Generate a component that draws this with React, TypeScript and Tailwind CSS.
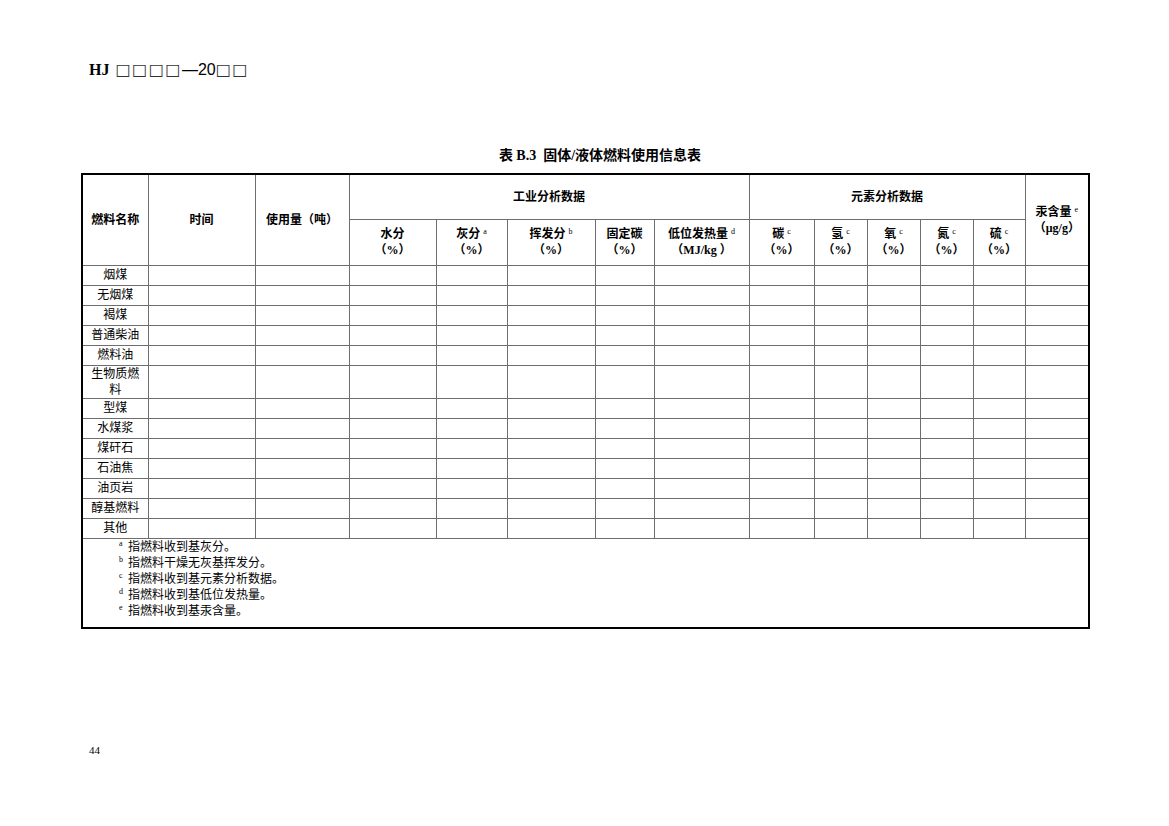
const serif = { fontFamily: '"Liberation Serif", "Noto Sans CJK SC", serif' };

const cols = [66, 107, 94, 87, 71, 88, 59, 95, 65, 53, 53, 53, 52, 64];

const fuels = [
  "烟煤",
  "无烟煤",
  "褐煤",
  "普通柴油",
  "燃料油",
  "生物质燃料",
  "型煤",
  "水煤浆",
  "煤矸石",
  "石油焦",
  "油页岩",
  "醇基燃料",
  "其他",
];

const notes = [
  ["a", "指燃料收到基灰分。"],
  ["b", "指燃料干燥无灰基挥发分。"],
  ["c", "指燃料收到基元素分析数据。"],
  ["d", "指燃料收到基低位发热量。"],
  ["e", "指燃料收到基汞含量。"],
];

const cell = "border border-[#6e6e6e] p-0";

function Sup({ children }: { children: string }) {
  return <sup className="ml-[3px] text-[8px] font-normal">{children}</sup>;
}

function SubHead({ name, sup, unit }: { name: string; sup?: string; unit: string }) {
  return (
    <th className={`${cell} text-center align-middle`}>
      <div>
        {name}
        {sup && <Sup>{sup}</Sup>}
      </div>
      <div>{unit}</div>
    </th>
  );
}

export default function App() {
  return (
    <div className="relative h-[826px] w-[1169px] overflow-hidden bg-white text-black" style={serif}>
      <div className="pl-[81px]">
        {/* page header */}
        <div className="ml-[8px] mt-[60px] flex h-[20px] items-center text-[16px] leading-[20px]">
          <span className="font-bold" style={{ fontFamily: '"Liberation Serif", serif' }}>
            HJ
          </span>
          <span
            className="ml-[6px] tracking-[1.5px] text-[#333]"
            style={{ fontFamily: '"DejaVu Sans", sans-serif' }}
          >
            □□□□
          </span>
          <span style={{ fontFamily: '"Liberation Sans", sans-serif' }}>—20</span>
          <span
            className="tracking-[1.5px] text-[#333]"
            style={{ fontFamily: '"DejaVu Sans", sans-serif' }}
          >
            □□
          </span>
        </div>

        {/* table caption */}
        <div className="mt-[66px] h-[20px] w-[1008px] pl-[30px] text-center text-[14px] font-bold leading-[20px]">
          表 B.3&nbsp; 固体/液体燃料使用信息表
        </div>

        <table className="mt-[7px] w-[1008px] table-fixed border-collapse border-2 border-black text-[12px] leading-[16px]">
          <colgroup>
            {cols.map((w, i) => (
              <col key={i} style={{ width: w }} />
            ))}
          </colgroup>
          <thead className="font-bold">
            <tr className="h-[45px]">
              <th rowSpan={2} className={`${cell} text-center align-middle`}>
                燃料名称
              </th>
              <th rowSpan={2} className={`${cell} text-center align-middle`}>
                时间
              </th>
              <th rowSpan={2} className={`${cell} text-center align-middle`}>
                使用量（吨）
              </th>
              <th colSpan={5} className={`${cell} text-center align-middle`}>
                工业分析数据
              </th>
              <th colSpan={5} className={`${cell} text-center align-middle`}>
                元素分析数据
              </th>
              <th rowSpan={2} className={`${cell} text-center align-middle`}>
                <div>
                  汞含量
                  <Sup>e</Sup>
                </div>
                <div>（μg/g）</div>
              </th>
            </tr>
            <tr className="h-[46px]">
              <SubHead name="水分" unit="（%）" />
              <SubHead name="灰分" sup="a" unit="（%）" />
              <SubHead name="挥发分" sup="b" unit="（%）" />
              <SubHead name="固定碳" unit="（%）" />
              <SubHead name="低位发热量" sup="d" unit="（MJ/kg ）" />
              <SubHead name="碳" sup="c" unit="（%）" />
              <SubHead name="氢" sup="c" unit="（%）" />
              <SubHead name="氧" sup="c" unit="（%）" />
              <SubHead name="氮" sup="c" unit="（%）" />
              <SubHead name="硫" sup="c" unit="（%）" />
            </tr>
          </thead>
          <tbody>
            {fuels.map((f) => (
              <tr key={f} className={f === "生物质燃料" ? "h-[33px]" : "h-[20px]"}>
                <td className={`${cell} px-[5px] text-center align-middle`}>{f}</td>
                {cols.slice(1).map((_, i) => (
                  <td key={i} className={cell} />
                ))}
              </tr>
            ))}
            <tr className="h-[90px]">
              <td colSpan={14} className={`${cell} pl-[36px] pt-0 align-top`}>
                {notes.map(([s, t]) => (
                  <div key={s} className="flex h-[16px] items-center text-[12px] leading-[16px]">
                    <span className="relative -top-[3px] w-[9px] text-[8px] leading-none">{s}</span>
                    <span>{t}</span>
                  </div>
                ))}
              </td>
            </tr>
          </tbody>
        </table>

        <div className="ml-[8px] mt-[114px] h-[14px] text-[11px] leading-[14px]">44</div>
      </div>
    </div>
  );
}
